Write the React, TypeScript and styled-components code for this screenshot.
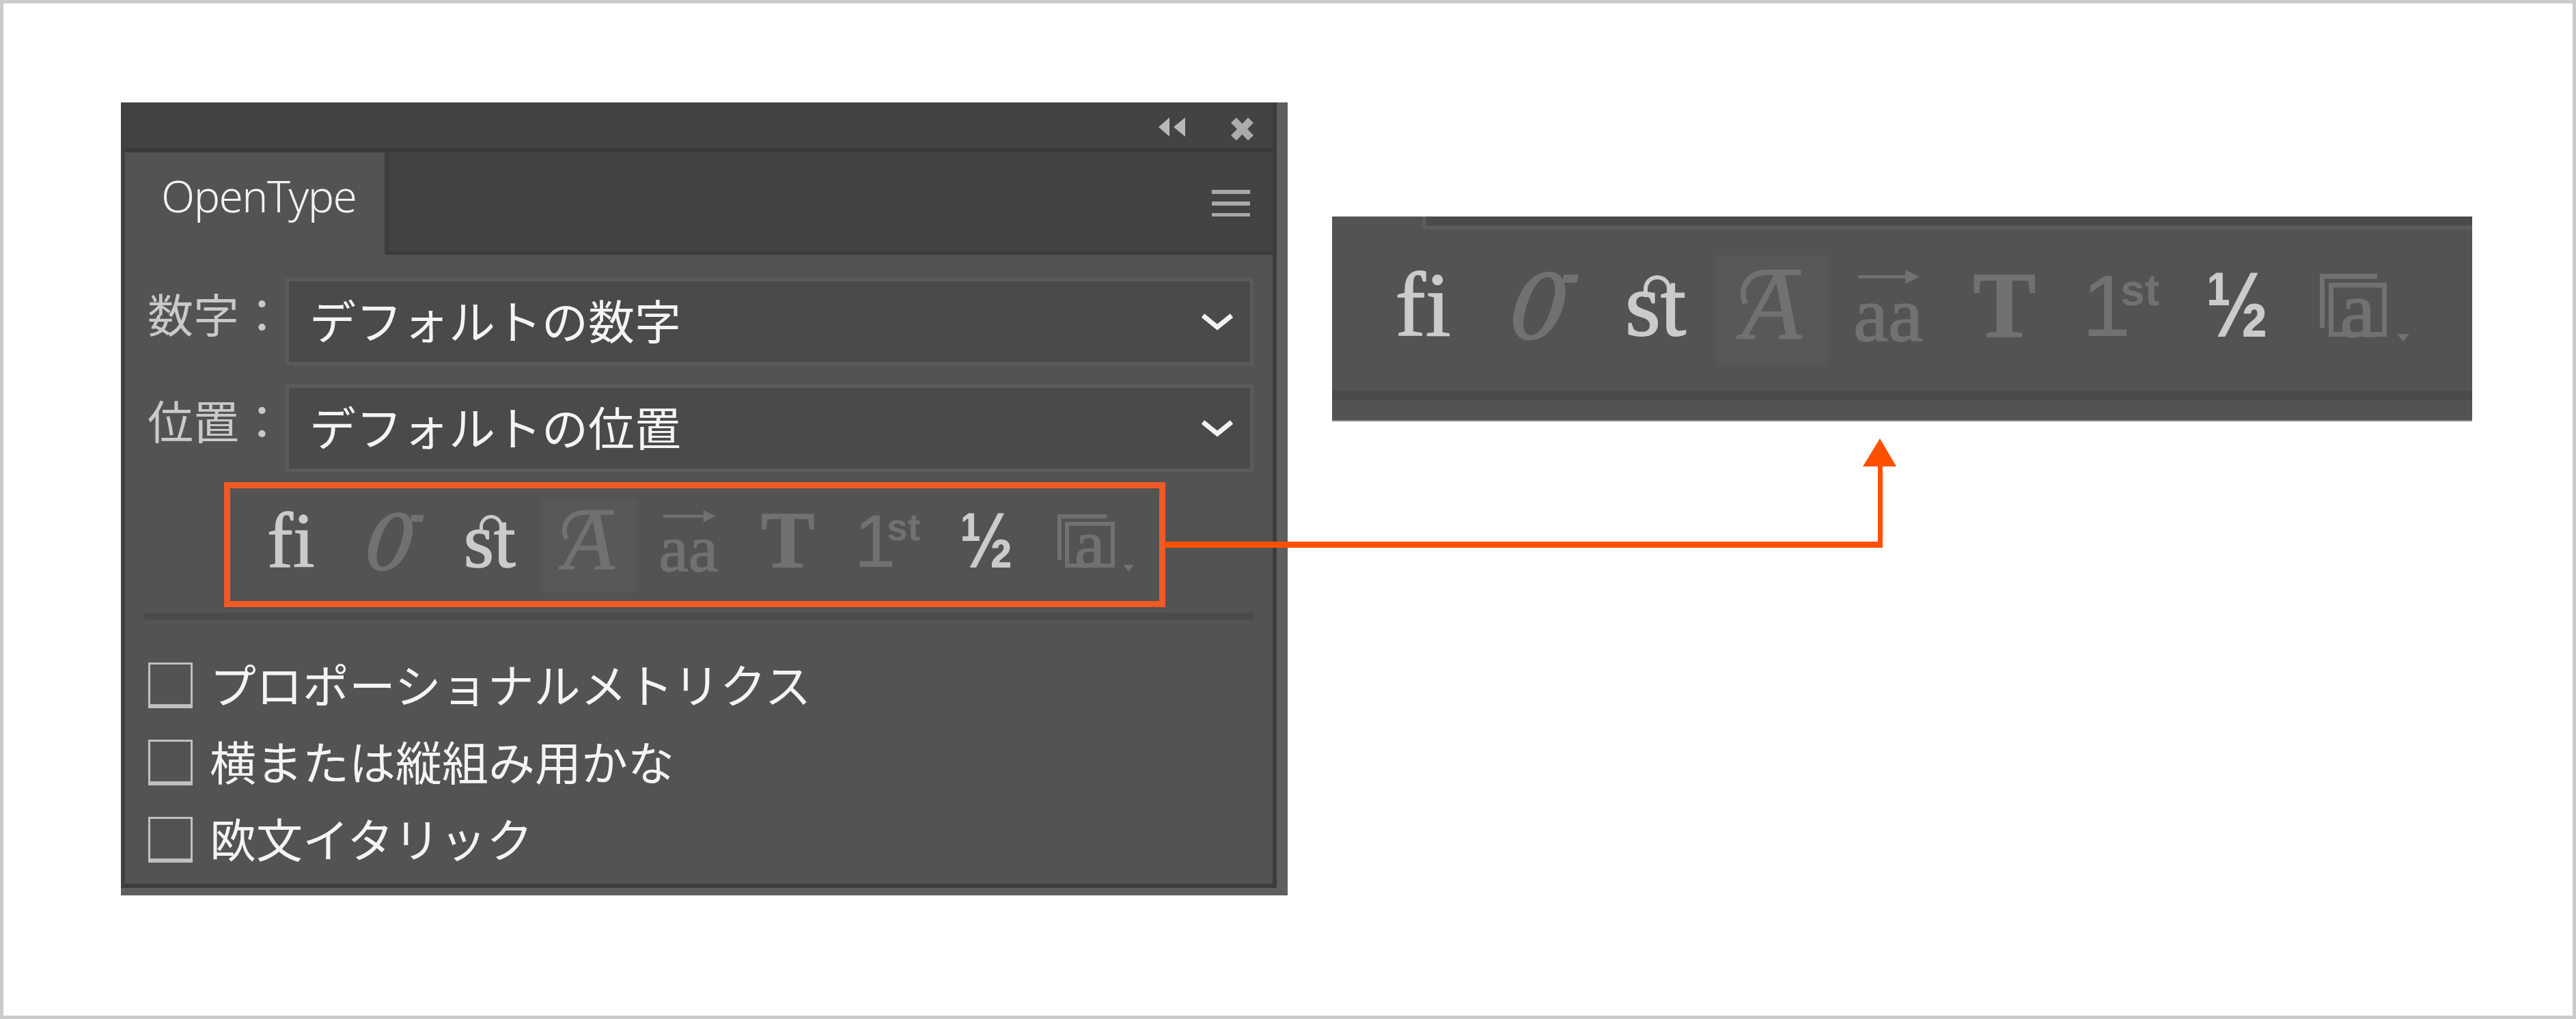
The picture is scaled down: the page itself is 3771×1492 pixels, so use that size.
import { createGlobalStyle, styled } from "styled-components";

const UI_FONT = `"Noto Sans CJK JP", "Noto Sans", sans-serif`;
const SERIF = `"Liberation Serif", serif`;
const SANS = `"Liberation Sans", sans-serif`;
const ON = "#cbcbcb";
const OFF = "#717171";

const GlobalStyle = createGlobalStyle`
  html, body {
    margin: 0;
    padding: 0;
    background: #fff;
  }
`;

const App = (): JSX.Element => {
  return (
    <PageS>
      <GlobalStyle />
      <PanelS>
        <PanelFrameS>
          <TitleBarS>
            <CollapseIcon />
            <CloseIcon />
          </TitleBarS>
          <TabRowS>
            <TabS>OpenType</TabS>
            <MenuIcon />
          </TabRowS>
          <PanelBodyS>
            <Field label="数字：" value="デフォルトの数字" />
            <Field label="位置：" value="デフォルトの位置" />
            <HighlightBoxS>
              <GlyphRow $size={100} />
            </HighlightBoxS>
            <DividerS />
            <CheckListS>
              <CheckRow text="プロポーショナルメトリクス" />
              <CheckRow text="横または縦組み用かな" />
              <CheckRow text="欧文イタリック" />
            </CheckListS>
          </PanelBodyS>
        </PanelFrameS>
      </PanelS>

      <StripS>
        <StripTopS />
        <StripRowS>
          <GlyphRow $size={117} />
        </StripRowS>
        <StripBandS />
      </StripS>

      <ConnectorS viewBox="0 0 3771 1492">
        <path d="M1706 793h1043v-110h7v119h-1050z" fill="#ff5000" />
        <polygon points="2752,642 2776,683 2727,683" fill="#ff5000" />
      </ConnectorS>
    </PageS>
  );
};

export default App;

const Field = ({ label, value }: { label: string; value: string }): JSX.Element => {
  return (
    <FieldS>
      <FieldLabelS>{label}</FieldLabelS>
      <SelectS>
        <SelectTextS>{value}</SelectTextS>
        <ChevronIcon />
      </SelectS>
    </FieldS>
  );
};

const CheckRow = ({ text }: { text: string }): JSX.Element => {
  return (
    <CheckRowS>
      <CheckBoxS />
      <CheckTextS>{text}</CheckTextS>
    </CheckRowS>
  );
};

/** OpenType 機能ボタンの列 - パネルと拡大図で共通 */
const GlyphRow = ({ $size }: { $size: number }): JSX.Element => {
  return (
    <GlyphRowS $size={$size}>
      <GlyphCellS>
        <GlyphS $tone={ON} $em={1.14}>fi</GlyphS>
      </GlyphCellS>
      <GlyphCellS>
        <SlantOGlyphS>
          O
          <SlantTailS />
        </SlantOGlyphS>
      </GlyphCellS>
      <GlyphCellS>
        <StGlyphS>st</StGlyphS>
      </GlyphCellS>
      <GlyphCellS $active>
        <SwashGlyphS>
          A
          <SwashIcon />
        </SwashGlyphS>
      </GlyphCellS>
      <GlyphCellS>
        <ArrowStackS>
          <ArrowIcon />
          <span>aa</span>
        </ArrowStackS>
      </GlyphCellS>
      <GlyphCellS>
        <GlyphS $tone={OFF} $em={1.18} $bold>T</GlyphS>
      </GlyphCellS>
      <GlyphCellS>
        <OrdinalS>
          1<sup>st</sup>
        </OrdinalS>
      </GlyphCellS>
      <GlyphCellS>
        <FractionS>½</FractionS>
      </GlyphCellS>
      <GlyphCellS>
        <FrameGlyphS>
          <FrameInnerS>a</FrameInnerS>
        </FrameGlyphS>
      </GlyphCellS>
    </GlyphRowS>
  );
};

const CollapseIcon = (): JSX.Element => (
  <svg width="39" height="28" viewBox="0 0 39 28">
    <polygon points="0,14 16,0 16,28" fill="#b8b8b8" />
    <polygon points="22,14 39,0 39,28" fill="#b8b8b8" />
  </svg>
);

const CloseIcon = (): JSX.Element => (
  <svg width="33" height="34" viewBox="0 0 33 34">
    <path d="M4 4l25 26M29 4L4 30" stroke="#ababab" strokeWidth="11" fill="none" />
  </svg>
);

const MenuIcon = (): JSX.Element => (
  <MenuIconS width="56" height="39" viewBox="0 0 56 39">
    <path d="M0 0h56v6H0zM0 17h56v6H0zM0 34h56v5H0z" fill="#a9a9a9" />
  </MenuIconS>
);

const ChevronIcon = (): JSX.Element => (
  <svg width="50" height="28" viewBox="0 0 50 28">
    <path d="M4 5l21 17L46 5" stroke="#f2f2f2" strokeWidth="7" fill="none" />
  </svg>
);

const SwashIcon = (): JSX.Element => (
  <SwashSvgS viewBox="0 0 90 90">
    <path d="M10 42C2 26 12 9 32 8h38" stroke={OFF} strokeWidth="6" fill="none" />
  </SwashSvgS>
);

const ArrowIcon = (): JSX.Element => (
  <ArrowSvgS viewBox="0 0 80 18">
    <path d="M2 7h62v4H2z" fill={OFF} />
    <polygon points="62,0 80,9 62,18" fill={OFF} />
  </ArrowSvgS>
);

/** 페이지 전체 */
const PageS = styled.div`
  position: relative;
  display: flex;
  align-items: flex-start;
  gap: 65px;
  box-sizing: border-box;
  width: 3771px;
  height: 1492px;
  padding: 150px 0 0 177px;
  overflow: hidden;
  background: #fff;
  box-shadow: inset 0 0 0 5px #cbcbcb;
  font-family: ${UI_FONT};
`;

const PanelS = styled.section`
  display: flex;
  flex: none;
  box-sizing: border-box;
  width: 1708px;
  height: 1161px;
  padding: 0 16px 11px 0;
  background: #5e5e5e;
`;

const PanelFrameS = styled.div`
  display: flex;
  flex: 1;
  flex-direction: column;
  min-width: 0;
  border-left: 6px solid #414141;
  border-right: 6px solid #3c3c3c;
  border-bottom: 6px solid #3c3c3c;
`;

const TitleBarS = styled.div`
  display: flex;
  flex: none;
  align-items: flex-start;
  justify-content: flex-end;
  gap: 67px;
  box-sizing: border-box;
  height: 73px;
  padding: 22px 28px 0 0;
  background: #434343;
  border-bottom: 6px solid #393939;
`;

const TabRowS = styled.div`
  display: flex;
  flex: none;
  align-items: flex-start;
  justify-content: space-between;
  box-sizing: border-box;
  height: 150px;
  padding-right: 33px;
  background: #434343;
  border-bottom: 5px solid #3a3a3a;
`;

const TabS = styled.div`
  box-sizing: border-box;
  width: 386px;
  height: 150px;
  padding: 0 0 0 53px;
  background: #535353;
  border-right: 6px solid #3d3d3d;
  color: #f2f2f2;
  font-family: "Noto Sans", sans-serif;
  font-size: 64px;
  font-weight: 300;
  line-height: 128px;
  letter-spacing: -1.5px;
`;

const MenuIconS = styled.svg`
  margin-top: 55px;
`;

const PanelBodyS = styled.div`
  display: flex;
  flex: 1;
  flex-direction: column;
  padding-top: 34px;
  background: #535353;
`;

const FieldS = styled.div`
  display: flex;
  align-items: center;
  height: 128px;
  margin: 0 28px 28px 33px;
`;

const FieldLabelS = styled.span`
  width: 202px;
  flex: none;
  margin-top: -28px;
  color: #c9c9c9;
  font-size: 67px;
  line-height: 67px;
`;

const SelectS = styled.div`
  display: flex;
  flex: 1;
  align-items: center;
  justify-content: space-between;
  box-sizing: border-box;
  height: 128px;
  padding: 0 23px 0 30px;
  background: #4a4a4a;
  border: 5px solid #5b5b5b;
  color: #f4f4f4;
  font-size: 68px;
  line-height: 68px;
`;

const SelectTextS = styled.span`
  margin-top: -7px;
`;

const HighlightBoxS = styled.div`
  display: flex;
  align-items: center;
  box-sizing: border-box;
  width: 1378px;
  height: 183px;
  margin: -13px 0 0 145px;
  padding-left: 16px;
  border: 9px solid #f15a24;
`;

const DividerS = styled.div`
  height: 10px;
  margin: 8px 28px 0 28px;
  background: #4a4a4a;
`;

const CheckListS = styled.div`
  display: flex;
  flex-direction: column;
  gap: 46px;
  padding: 63px 0 0 34px;
`;

const CheckRowS = styled.label`
  display: flex;
  align-items: center;
  gap: 25px;
  height: 67px;
  color: #f4f4f4;
  font-size: 68px;
  line-height: 68px;
`;

const CheckBoxS = styled.span`
  flex: none;
  box-sizing: border-box;
  width: 65px;
  height: 67px;
  border: 3px solid #c0c0c0;
  border-bottom-width: 6px;
`;

const CheckTextS = styled.span`
  margin-top: -6px;
`;

/** 오른쪽 확대 그림 */
const StripS = styled.section`
  display: flex;
  flex: none;
  flex-direction: column;
  box-sizing: border-box;
  width: 1669px;
  height: 300px;
  margin-top: 167px;
  background: #535353;
  border-bottom: 2px solid #8a8a8a;
`;

const StripTopS = styled.div`
  height: 13px;
  margin-left: 132px;
  background: #4a4a4a;
  border-left: 6px solid #5c5c5c;
  border-bottom: 6px solid #5c5c5c;
`;

const StripRowS = styled.div`
  display: flex;
  align-items: center;
  height: 168px;
  margin-top: 34px;
  padding-left: 48px;
`;

const StripBandS = styled.div`
  height: 13px;
  margin-top: 34px;
  background: #4a4a4a;
`;

const GlyphRowS = styled.div<{ $size: number }>`
  display: flex;
  align-items: center;
  font-size: ${({ $size }) => $size}px;
  font-family: ${SERIF};
`;

const GlyphCellS = styled.div<{ $active?: boolean }>`
  display: flex;
  flex: none;
  align-items: center;
  justify-content: center;
  box-sizing: border-box;
  width: 1.455em;
  height: 1.42em;
  padding-bottom: 0.12em;
  background: ${({ $active }) => ($active ? "#585858" : "transparent")};
  box-shadow: ${({ $active }) => ($active ? "inset 0 0 0 0.04em #555" : "none")};
`;

const GlyphS = styled.span<{ $tone: string; $em: number; $bold?: boolean }>`
  color: ${({ $tone }) => $tone};
  font-size: ${({ $em }) => $em}em;
  font-weight: ${({ $bold }) => ($bold ? 700 : 400)};
  line-height: 1;
  -webkit-text-stroke: 0.012em ${({ $tone }) => $tone};
`;

const SlantOGlyphS = styled.span`
  position: relative;
  display: inline-block;
  color: ${OFF};
  font-size: 1.28em;
  font-style: italic;
  font-weight: 700;
  line-height: 1;
  transform: scaleX(0.72) skewX(-14deg);
`;

const SlantTailS = styled.span`
  position: absolute;
  top: 0.2em;
  right: -0.1em;
  width: 0.2em;
  height: 0.08em;
  background: ${OFF};
`;

const StGlyphS = styled.span`
  position: relative;
  color: ${ON};
  font-size: 1.14em;
  line-height: 1;
  -webkit-text-stroke: 0.015em ${ON};

  &::before {
    content: "";
    position: absolute;
    top: 0.17em;
    left: 0.2em;
    box-sizing: border-box;
    width: 0.3em;
    height: 0.24em;
    border: 0.05em solid ${ON};
    border-bottom: none;
    border-radius: 0.15em 0.15em 0 0;
  }
`;

const SwashGlyphS = styled.span`
  position: relative;
  color: ${OFF};
  font-size: 1.22em;
  font-style: italic;
  line-height: 1;
  -webkit-text-stroke: 0.012em ${OFF};
`;

const SwashSvgS = styled.svg`
  position: absolute;
  top: 0.09em;
  left: -0.06em;
  width: 0.85em;
  height: 0.85em;
`;

const ArrowStackS = styled.span`
  display: flex;
  flex-direction: column;
  align-items: center;
  color: ${OFF};
  font-size: 0.98em;
  line-height: 0.66;
  -webkit-text-stroke: 0.015em ${OFF};
`;

const ArrowSvgS = styled.svg`
  width: 0.82em;
  height: 0.18em;
  margin-bottom: 0.07em;
`;

const OrdinalS = styled.span`
  display: flex;
  align-items: flex-start;
  color: ${OFF};
  font-family: ${SANS};
  font-size: 1.1em;
  line-height: 1;
  letter-spacing: -0.12em;

  sup {
    margin: 0.16em 0 0 0;
    font-size: 0.5em;
    font-weight: 700;
    line-height: 1;
    letter-spacing: 0;
  }
`;

const FractionS = styled.span`
  display: inline-block;
  color: ${ON};
  font-family: ${SANS};
  font-size: 1.15em;
  font-weight: 700;
  line-height: 1;
  transform: scaleX(0.82);
`;

const FrameGlyphS = styled.span`
  position: relative;
  display: block;
  box-sizing: border-box;
  width: 0.84em;
  height: 0.78em;
  padding: 0.11em 0 0 0.11em;

  &::before {
    content: "";
    position: absolute;
    top: 0;
    left: 0;
    width: 0.72em;
    height: 0.67em;
    box-sizing: border-box;
    border-top: 0.06em solid ${OFF};
    border-left: 0.06em solid ${OFF};
  }

  &::after {
    content: "";
    position: absolute;
    right: -0.28em;
    bottom: -0.06em;
    border-left: 0.085em solid transparent;
    border-right: 0.085em solid transparent;
    border-top: 0.1em solid ${OFF};
  }
`;

const FrameInnerS = styled.span`
  display: flex;
  align-items: center;
  justify-content: center;
  box-sizing: border-box;
  width: 0.73em;
  height: 0.67em;
  border: 0.06em solid ${OFF};
  color: ${OFF};
  font-size: 1em;
  line-height: 1;
  -webkit-text-stroke: 0.015em ${OFF};
`;

const ConnectorS = styled.svg`
  position: absolute;
  top: 0;
  left: 0;
  width: 3771px;
  height: 1492px;
  pointer-events: none;
`;
